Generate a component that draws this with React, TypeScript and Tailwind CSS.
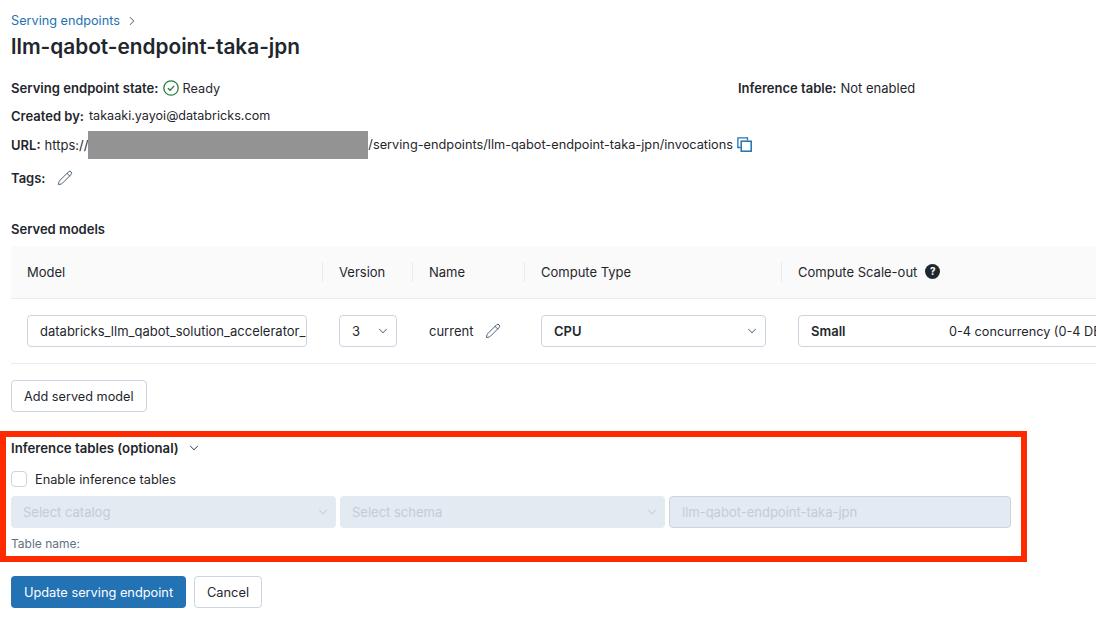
import { ChevronDown, ChevronRight, Pencil } from "lucide-react";

// Small chevron used by the select boxes
function Chevron({ className = "text-[#5f7281]" }: { className?: string }) {
  return <ChevronDown size={14} strokeWidth={1.75} className={className} />;
}

function EditIcon() {
  return <Pencil size={16} strokeWidth={1.4} className="text-[#44566c]" />;
}

function HeaderCell({ label, width, divider = true, children }: { label: string; width: string; divider?: boolean; children?: React.ReactNode }) {
  return (
    <div className={`flex items-center h-[20px] pl-4 shrink-0 ${width} ${divider ? "border-r border-[#e8ecf0]" : ""}`}>
      <span>{label}</span>
      {children}
    </div>
  );
}

export default function App() {
  return (
    <div
      className="h-[623px] w-[1096px] overflow-hidden bg-white px-[11px] text-[13px] leading-5 text-[#1f272d]"
      style={{ fontFamily: "Inter, 'Liberation Sans', sans-serif" }}
    >
      {/* Breadcrumb and title */}
      <div className="flex items-center gap-[5px] pt-[11px] text-[12.7px] text-[#2272b4]">
        <span>Serving endpoints</span>
        <ChevronRight size={14} strokeWidth={1.75} className="text-[#5f7281]" />
      </div>
      <h1 className="mt-[2px] text-[20.8px] leading-[28px] font-semibold">llm-qabot-endpoint-taka-jpn</h1>

      {/* Endpoint details */}
      <div className="mt-[17px] flex h-[20px] items-center">
        <div className="flex w-[727px] items-center">
          <span className="text-[13.1px] font-semibold">Serving endpoint state:</span>
          <svg width="16" height="16" viewBox="0 0 16 16" fill="none" className="ml-[4px] mr-[4px] text-[#277c43]">
            <circle cx="8" cy="8" r="7.2" stroke="currentColor" strokeWidth="1.3" />
            <path d="M4.9 8.2 7.1 10.3 11.2 5.9" stroke="currentColor" strokeWidth="1.3" />
          </svg>
          <span className="pt-px text-[12.7px]">Ready</span>
        </div>
        <span className="font-semibold">Inference table:</span>
        <span className="ml-[4px]">Not enabled</span>
      </div>
      <div className="mt-2 flex h-[20px] items-center">
        <span className="font-semibold">Created by:</span>
        <span className="ml-[5px] text-[12.6px]">takaaki.yayoi@databricks.com</span>
      </div>
      <div className="mt-[9px] flex h-[20px] items-center">
        <span className="font-semibold">URL:</span>
        <span className="ml-[4px]">https://</span>
        <div className="my-[-4px] h-[28px] w-[280px] bg-[#939393]" />
        <span className="text-[12.75px]">/serving-endpoints/llm-qabot-endpoint-taka-jpn/invocations</span>
        <svg width="15" height="15" viewBox="0 0 15 15" fill="none" className="ml-[4px] -mt-[2px] text-[#2272b4]">
          <path d="M3.5 10.5H.9V.9h9.6v2.6" stroke="currentColor" strokeWidth="1.3" />
          <rect x="4.2" y="4.2" width="10" height="10" stroke="currentColor" strokeWidth="1.5" />
        </svg>
      </div>
      <div className="mt-[13px] flex h-[20px] items-center">
        <span className="font-semibold">Tags:</span>
        <span className="ml-[11px]"><EditIcon /></span>
      </div>

      {/* Served models table */}
      <div className="mt-[31px] h-[20px] font-semibold">Served models</div>
      <div className="-mr-[11px] mt-[7px] w-[1085px] overflow-hidden">
        <div className="flex h-[53px] items-center border-b border-[#e8ecf0] bg-[#fafafa]">
          <HeaderCell label="Model" width="w-[312px]" />
          <HeaderCell label="Version" width="w-[90px]" />
          <HeaderCell label="Name" width="w-[112px]" />
          <HeaderCell label="Compute Type" width="w-[257px]" />
          <HeaderCell label="Compute Scale-out" width="w-[300px]" divider={false}>
            <span className="ml-[8px] -mt-[2px] flex h-[15px] w-[15px] items-center justify-center rounded-full bg-[#1f272d] text-[10px] leading-none font-bold text-white">?</span>
          </HeaderCell>
        </div>
        <div className="flex h-[65px] items-center border-b border-[#e8ecf0]">
          <div className="w-[312px] shrink-0 pl-4">
            <div className="flex h-[32px] w-[280px] items-center overflow-hidden rounded border border-[#cbd5e1] pl-3 whitespace-nowrap">
              databricks_llm_qabot_solution_accelerator_model
            </div>
          </div>
          <div className="w-[90px] shrink-0 pl-4">
            <div className="flex h-[32px] w-[58px] items-center justify-between rounded border border-[#cbd5e1] pl-3 pr-[6px]">
              <span>3</span>
              <Chevron />
            </div>
          </div>
          <div className="flex w-[112px] shrink-0 items-center pl-4">
            <span>current</span>
            <span className="ml-[12px]"><EditIcon /></span>
          </div>
          <div className="w-[257px] shrink-0 pl-4">
            <div className="flex h-[32px] w-[225px] items-center justify-between rounded border border-[#cbd5e1] pl-3 pr-[6px] font-semibold">
              <span>CPU</span>
              <Chevron />
            </div>
          </div>
          <div className="shrink-0 pl-4">
            <div className="flex h-[32px] w-[400px] items-center rounded border border-[#cbd5e1] pl-3 whitespace-nowrap">
              <span className="w-[138px] font-semibold">Small</span>
              <span className="pt-px text-[12.7px]">0-4 concurrency (0-4 DBU)</span>
            </div>
          </div>
        </div>
      </div>

      <button className="mt-4 flex h-[32px] items-center rounded border border-[#cbd5e1] bg-white px-3 pt-px text-[12.7px]">Add served model</button>

      {/* Inference tables section, boxed in red on the screenshot */}
      <div className="-ml-[11px] mt-[19px] h-[131px] w-[1027px] border-[6px] border-[#ff2a00] pl-[5px]">
        <div className="mt-[1px] flex h-[20px] items-center gap-[8px]">
          <span className="text-[13.2px] font-semibold">Inference tables (optional)</span>
          <Chevron className="text-[#44566c]" />
        </div>
        <div className="mt-[13px] flex h-[16px] items-center gap-2">
          <div className="h-4 w-4 rounded border border-[#cbd5e1]" />
          <span className="pt-px text-[12.75px]">Enable inference tables</span>
        </div>
        <div className="mt-[9px] flex gap-1 text-[#c0cdd8]">
          <div className="flex h-[32px] w-[325px] items-center justify-between rounded bg-[#e4eaf1] pl-3 pr-[6px]">
            <span>Select catalog</span>
            <Chevron className="text-[#c0cdd8]" />
          </div>
          <div className="flex h-[32px] w-[325px] items-center justify-between rounded bg-[#e4eaf1] pl-3 pr-[6px]">
            <span>Select schema</span>
            <Chevron className="text-[#c0cdd8]" />
          </div>
          <div className="flex h-[32px] w-[342px] items-center rounded border border-[#cbd5e1] bg-[#e4eaf1] pl-3">
            llm-qabot-endpoint-taka-jpn
          </div>
        </div>
        <div className="mt-[6px] text-[12px] leading-[20px] text-[#5f7281]">Table name:</div>
      </div>

      {/* Form actions */}
      <div className="mt-[14px] flex gap-2">
        <button className="h-[32px] w-[175px] rounded bg-[#2272b4] pt-px text-[12.8px] text-white">Update serving endpoint</button>
        <button className="h-[32px] w-[68px] rounded border border-[#cbd5e1] bg-white pt-px text-[12.8px]">Cancel</button>
      </div>
    </div>
  );
}
